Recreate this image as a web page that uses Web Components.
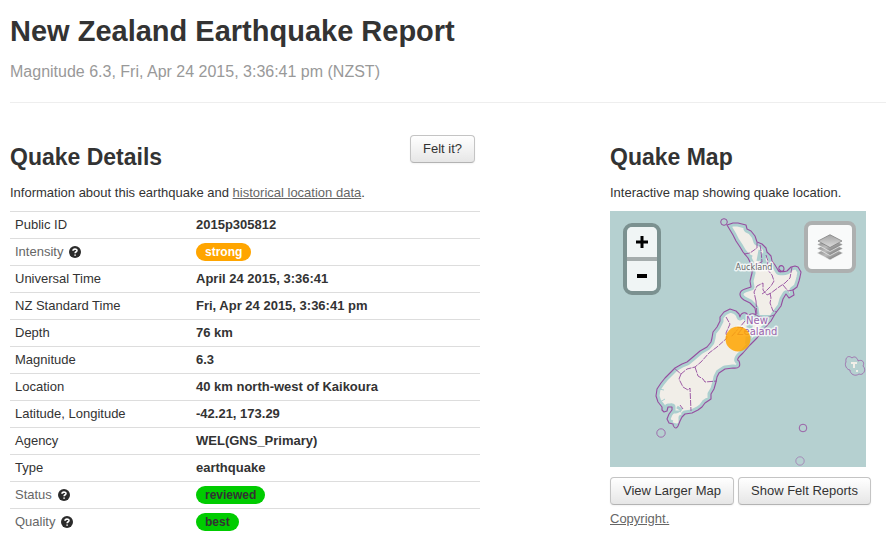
<!DOCTYPE html>
<html lang="en">
<head>
<meta charset="utf-8">
<title>New Zealand Earthquake Report</title>
<style>
  body { margin: 0; background: #fff; color: #333; font: 13px/18px "Liberation Sans", Arial, sans-serif; }
</style>
</head>
<body>
<quake-report></quake-report>

<template id="t-report">
  <style>
    :host { display: block; padding-left: 10px; }
    main { display: grid; grid-template-columns: minmax(0, 470fr) minmax(0, 276fr); column-gap: 130px; }
  </style>
  <report-header>
    New Zealand Earthquake Report
    <span slot="summary">Magnitude 6.3, Fri, Apr 24 2015, 3:36:41 pm (NZST)</span>
  </report-header>
  <main>
    <quake-section>
      <span slot="title">Quake Details</span>
      <push-button slot="action">Felt it?</push-button>
      <span slot="intro">Information about this earthquake and <text-link>historical location data</text-link>.</span>
      <detail-table></detail-table>
    </quake-section>
    <quake-section>
      <span slot="title">Quake Map</span>
      <span slot="intro">Interactive map showing quake location.</span>
      <quake-map></quake-map>
      <map-actions>
        <push-button>View Larger Map</push-button>
        <push-button>Show Felt Reports</push-button>
        <text-link slot="note">Copyright.</text-link>
      </map-actions>
    </quake-section>
  </main>
</template>

<template id="t-header">
  <style>
    :host { display: block; padding: 13px 0 21px; border-bottom: 1px solid #eee; }
    h1 { margin: 0; font-size: 29px; line-height: 36px; font-weight: bold; }
    p { margin: 13px 0 0; font-size: 16px; line-height: 19px; color: #999; }
  </style>
  <h1><slot></slot></h1>
  <p><slot name="summary"></slot></p>
</template>

<template id="t-section">
  <style>
    :host { display: block; padding-top: 32px; min-width: 0; }
    header { display: flex; justify-content: space-between; align-items: flex-start; height: 40px; padding-right: 5px; }
    h2 { margin: 0; padding-top: 4px; font-size: 23px; line-height: 36px; }
    p { margin: 9px 0; }
  </style>
  <header><h2><slot name="title"></slot></h2><slot name="action"></slot></header>
  <p><slot name="intro"></slot></p>
  <slot></slot>
</template>

<template id="t-button">
  <style>
    :host { display: inline-block; }
    button { display: block; margin: 0; padding: 4px 12px; font: inherit; color: #333; white-space: nowrap; cursor: pointer;
      border: 1px solid #c4c4c4; border-bottom-color: #b3b3b3; border-radius: 4px;
      background: linear-gradient(#fff, #e6e6e6); box-shadow: inset 0 1px 0 rgba(255,255,255,.2), 0 1px 2px rgba(0,0,0,.05); }
  </style>
  <button type="button"><slot></slot></button>
</template>

<template id="t-link"><style>
    :host { display: inline; }
    a { color: #666; text-decoration: underline; }
  </style><a href="#"><slot></slot></a></template>

<template id="t-pill">
  <style>
    :host { display: inline-block; padding: 0 9px; border-radius: 9px; background: #0c0; color: #333; font-size: 12px; line-height: 18px; vertical-align: top; }
    :host([tone="strong"]) { background: orange; color: #fff; }
  </style>
  <slot></slot>
</template>

<template id="t-help">
  <style>
    :host { display: inline; }
    a { display: inline-flex; align-items: center; gap: 6px; color: #666; text-decoration: none; vertical-align: top; }
    svg { display: block; width: 12px; height: 12px; }
  </style>
  <a href="#"><slot></slot><svg viewBox="0 0 12 12" aria-hidden="true"><circle cx="6" cy="6" r="6" fill="#2b2b2b"/><path d="M4 4.800C4 2.600 8 2.500 8 4.600 8 5.900 6.100 5.700 6.100 7.300M6.100 8.400V9.800" fill="none" stroke="#fff" stroke-width="1.6"/></svg></a>
</template>

<template id="t-table">
  <style>
    :host { display: block; }
    table { width: 100%; border-collapse: separate; border-spacing: 0; table-layout: fixed; }
    th, td { padding: 4px 5px; border-top: 1px solid #ddd; line-height: 18px; text-align: left; vertical-align: top; }
    th { width: 171px; font-weight: normal; }
    td { font-weight: bold; }
  </style>
  <table><tbody>
    <tr><th scope="row">Public ID</th><td>2015p305812</td></tr>
    <tr><th scope="row"><help-label>Intensity</help-label></th><td><status-pill tone="strong">strong</status-pill></td></tr>
    <tr><th scope="row">Universal Time</th><td>April 24 2015, 3:36:41</td></tr>
    <tr><th scope="row">NZ Standard Time</th><td>Fri, Apr 24 2015, 3:36:41 pm</td></tr>
    <tr><th scope="row">Depth</th><td>76 km</td></tr>
    <tr><th scope="row">Magnitude</th><td>6.3</td></tr>
    <tr><th scope="row">Location</th><td>40 km north-west of Kaikoura</td></tr>
    <tr><th scope="row">Latitude, Longitude</th><td>-42.21, 173.29</td></tr>
    <tr><th scope="row">Agency</th><td>WEL(GNS_Primary)</td></tr>
    <tr><th scope="row">Type</th><td>earthquake</td></tr>
    <tr><th scope="row"><help-label>Status</help-label></th><td><status-pill>reviewed</status-pill></td></tr>
    <tr><th scope="row"><help-label>Quality</help-label></th><td><status-pill>best</status-pill></td></tr>
  </tbody></table>
</template>

<template id="t-actions">
  <style>
    :host { display: block; padding-top: 10px; }
    div { display: flex; gap: 4px; margin-bottom: 5px; }
  </style>
  <div><slot></slot></div>
  <slot name="note"></slot>
</template>

<template id="t-map">
  <style>
    :host { display: block; position: relative; max-width: 256px; }
    .land { display: block; width: 100%; height: auto; background: #b5d0d0; }
    button { display: flex; align-items: center; justify-content: center; margin: 0; padding: 0; border: 0; cursor: pointer; }
    .zoom { position: absolute; left: 13px; top: 12px; width: 30px; border: 4px solid #7b9190; border-radius: 9px; overflow: hidden; }
    .zoom button { width: 30px; height: 30px; background: #f0f5f5; }
    .zoom button + button { height: 34px; border-top: 4px solid #a5adad; }
    .layers { position: absolute; right: 10px; top: 10px; width: 52px; height: 52px; border: 4px solid #adb0b0; border-radius: 8px; background: #f9fafa; }
    text { font-family: "DejaVu Sans", sans-serif; text-anchor: middle; paint-order: stroke; stroke: #fff; stroke-opacity: .75; stroke-width: 3px; stroke-linejoin: round; }
  </style>
  <svg class="land" viewBox="610 211 256 256" role="img" aria-label="Map of New Zealand with the quake marked">
    <defs>
      <path id="nz" d="M727 225L733 223 738 223 746 225 747 229 751 231 755 236 757 242 762 244 766 248 767 252 771 256 772 261 775 265 778 270 C779 273 784 272 784 269 C784 264 778 265 779 269 Q781 273 787 271 L791 267 795 266 798 267 801 272 800 277 799 281 797 287 793 290 794 295 789 298 786 294 783 299 781 306 775 314 771 321 763 330 757 338 750 345 743 353 Q735 360 739 361 Q742 369 733 368 L725 369 719 373 717 377 716 382 714 389 711 394 711 399 705 403 702 407 698 410 692 413 685 414 682 417 680 421 678 426 C676 430 673 427 673 424 L669 423 667 419 669 414 672 410 672 407 668 407 667 411 664 412 662 410 662 407 658 402 656 396 657 389 661 383 665 378 670 373 675 368 682 364 687 362 693 357 700 351 707 347 711 342 712 338 713 332 717 327 720 321 720 317 724 312 730 309 736 311 739 314 740 317 C741 312 747 311 748 316 Q752 312 756 315 L755 308 750 303 744 300 C738 296 739 291 745 289 L751 287 750 281 752 273 752 266 748 258 743 252 740 247 736 241 733 235Z"/>
      <clipPath id="inside"><use href="#nz"/></clipPath>
    </defs>
    <rect x="610" y="211" width="256" height="256" fill="#b5d0d0"/>
    <use href="#nz" fill="#f1eee8"/>
    <g clip-path="url(#inside)" fill="none" stroke="#accfcf" stroke-linejoin="round">
      <use href="#nz" stroke-width="7"/>
      <path d="M742 313L750 322 748 344M748 318H772M769 251L762 258 765 266M673 406L667 408" stroke-width="6"/>
      <path d="M668 412L674 412 681 412M677 407L682 410M746 254L752 257M760 250L758 261" stroke-width="3"/>
      <path d="M665 399L660 402M664 390L659 389M762 263L760 256M774 266L770 260" stroke-width="1"/>
    </g>
    <g fill="none" stroke="#954c9f" stroke-linejoin="round">
      <use href="#nz" stroke-width="1.1"/>
      <circle cx="724" cy="222" r="3.3"/>
      <circle cx="661" cy="433" r="4.2" stroke-opacity=".75"/>
      <circle cx="803" cy="428" r="3.8" stroke-opacity=".85"/>
      <circle cx="800" cy="461" r="4.2" stroke-opacity=".5"/>
      <path stroke-opacity=".65" d="M846 362C845 357 849 355 852 358C855 355 858 359 858 361C862 359 865 362 863 366C867 370 863 376 859 374C855 377 850 374 850 370C847 370 844 365 846 362Z"/>
      <g stroke-width="1" stroke-dasharray="6 1" stroke-opacity=".9">
        <path d="M744 254L750 253 757 248 757 242M760 245L761 251 762 262 754 265M766 255L768 261 767 269 772 275 774 281 771 286 765 292 762 294M756 301L754 292 757 286 763 283 763 290 767 295 771 293 779 287 785 283 790 278 792 267M783 285L788 291 793 290M770 293L771 298 770 303 773 311 777 312M756 301L757 316 766 318 774 315"/>
        <path d="M726 317L730 324 726 333 727 338 717 347 709 353 701 362 695 367 687 369 681 374 674 368M695 367L698 376 703 379 705 382 717 381M681 374L679 379 683 387 688 390 690 388 691 411M745 321L740 327 731 337M680 405L683 409"/>
      </g>
      <path d="M673 421L677 422 677 415 681 413" stroke="#f1eee8" stroke-width="3"/>
      <path d="M851 363H857M854 364V368M856 371H858" stroke="#f1eee8" stroke-width="2"/>
    </g>
    <text x="754" y="270" font-size="8" fill="#666">Auckland</text>
    <text x="757" y="324" font-size="10" fill="#9b63ac">New</text>
    <text x="757" y="335" font-size="10" fill="#9b63ac">Zealand</text>
    <circle cx="738" cy="339" r="12.5" fill="orange" fill-opacity=".85"/>
  </svg>
  <div class="zoom">
    <button type="button" aria-label="Zoom in"><svg width="12" height="12" viewBox="0 0 12 12"><path d="M0 6H12M6 0V12" stroke="#000" stroke-width="3"/></svg></button>
    <button type="button" aria-label="Zoom out"><svg width="10" height="4" viewBox="0 0 10 4"><path d="M0 2H10" stroke="#000" stroke-width="4"/></svg></button>
  </div>
  <button class="layers" type="button" aria-label="Layers">
    <svg width="26" height="26" viewBox="0 0 26 26">
      <defs><linearGradient id="g" x2="1" y2="1"><stop stop-color="#777"/><stop offset=".5" stop-color="#bbb"/><stop offset="1" stop-color="#555"/></linearGradient>
      <linearGradient id="h" x2="0" y2="1"><stop stop-color="#a5a5a5"/><stop offset="1" stop-color="#dcdcdc"/></linearGradient></defs>
      <g stroke="#f9fafa" stroke-width=".6">
        <path d="M0 19L13 12 26 19 13 26Z" fill="url(#g)"/>
        <path d="M0 14.500L13 7.500 26 14.500 13 21.500Z" fill="url(#g)"/>
        <path d="M0 10.500L13 3.500 26 10.500 13 17.500Z" fill="url(#g)"/>
      </g>
      <path d="M1 7L13 .7 25 7 13 13.500Z" fill="url(#h)" stroke="#777" stroke-width=".7"/>
    </svg>
  </button>
</template>

<script>
  const define = (name, templateId) => customElements.define(name, class extends HTMLElement {
    constructor() {
      super();
      this.attachShadow({ mode: "open" }).append(document.getElementById(templateId).content.cloneNode(true));
    }
  });
  define("report-header", "t-header");
  define("quake-section", "t-section");
  define("push-button", "t-button");
  define("text-link", "t-link");
  define("status-pill", "t-pill");
  define("help-label", "t-help");
  define("detail-table", "t-table");
  define("map-actions", "t-actions");
  define("quake-map", "t-map");
  define("quake-report", "t-report");
</script>
</body>
</html>
